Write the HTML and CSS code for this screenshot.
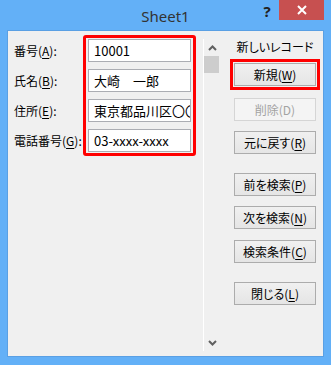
FILE: index.html
```html
<!DOCTYPE html>
<html lang="ja">
<head>
<meta charset="utf-8">
<title>Sheet1</title>
<link rel="stylesheet" href="styles.css">
</head>
<body>
<div class="window">
  <div class="titlebar">
    <div class="tb-left"></div>
    <div class="title">Sheet1</div>
    <div class="tb-controls">
      <div class="help">?</div>
      <div class="close">
        <svg width="10" height="10" viewBox="0 0 10 10"><path d="M1 1 L9 9 M9 1 L1 9" stroke="#fff" stroke-width="2" fill="none"/></svg>
      </div>
    </div>
  </div>
  <div class="client">
    <div class="form">
      <div class="labels">
        <div class="label">番号(<u>A</u>):</div>
        <div class="label">氏名(<u>B</u>):</div>
        <div class="label">住所(<u>E</u>):</div>
        <div class="label">電話番号(<u>G</u>):</div>
      </div>
      <div class="redbox">
        <div class="input">10001</div>
        <div class="input">大崎　一郎</div>
        <div class="input">東京都品川区〇〇</div>
        <div class="input">03-xxxx-xxxx</div>
      </div>
    </div>
    <div class="scrollbar">
      <div class="arrow">
        <svg width="9" height="6" viewBox="0 0 9 6"><path d="M1 5 L4.5 1.5 L8 5" stroke="#606060" stroke-width="2" fill="none"/></svg>
      </div>
      <div class="thumb"></div>
      <div class="track"></div>
      <div class="arrow">
        <svg width="9" height="6" viewBox="0 0 9 6"><path d="M1 1 L4.5 4.5 L8 1" stroke="#606060" stroke-width="2" fill="none"/></svg>
      </div>
    </div>
    <div class="buttons">
      <div class="caption">新しいレコード</div>
      <button class="btn focused">新規(<u>W</u>)</button>
      <button class="btn disabled">削除(D)</button>
      <button class="btn">元に戻す(<u>R</u>)</button>
      <button class="btn group">前を検索(<u>P</u>)</button>
      <button class="btn">次を検索(<u>N</u>)</button>
      <button class="btn after">検索条件(<u>C</u>)</button>
      <button class="btn group">閉じる(<u>L</u>)</button>
    </div>
  </div>
</div>
</body>
</html>
```

FILE: styles.css
```css
* { box-sizing: border-box; }
html, body { margin: 0; padding: 0; }
body {
  width: 331px;
  height: 365px;
  overflow: hidden;
  font-family: "Noto Sans CJK JP", "Noto Sans", sans-serif;
  font-feature-settings: "palt";
}
.window {
  width: 331px;
  height: 365px;
  background: #63b0f7;
  padding: 0 7px 8px 7px;
  display: flex;
  flex-direction: column;
}
.titlebar {
  height: 30px;
  display: grid;
  grid-template-columns: 1fr auto 1fr;
  margin: 0 -7px;
}
.title {
  font-family: "Noto Sans", sans-serif;
  font-size: 15px;
  color: #333;
  line-height: 30px;
  padding-top: 1px;
}
.tb-controls {
  display: flex;
  justify-content: flex-end;
  align-items: flex-start;
  padding-right: 7px;
}
.help {
  width: 24px;
  height: 20px;
  font-family: "Noto Sans", sans-serif;
  font-weight: bold;
  font-size: 15px;
  line-height: 22px;
  color: #222;
  text-align: center;
}
.close {
  width: 45px;
  height: 20px;
  background: #c75050;
  display: flex;
  align-items: center;
  justify-content: center;
}
.client {
  height: 327px;
  background: #f0f0f0;
  border: 1px solid #5aa0e4;
  display: flex;
  align-items: flex-start;
}
.form {
  display: flex;
  margin: 4px 0 0 6px;
}
.labels {
  width: 69px;
  padding-top: 4px;
  display: flex;
  flex-direction: column;
  gap: 7px;
}
.label {
  height: 23px;
  line-height: 23px;
  font-size: 12px;
  color: #000;
  white-space: nowrap;
}
u {
  text-underline-offset: 2px;
}
.redbox {
  position: relative;
  border: 3px solid #ff0000;
  border-radius: 3px;
  padding: 1px 2px;
  display: flex;
  flex-direction: column;
  gap: 7px;
}
.input {
  width: 103px;
  height: 23px;
  border: 1px solid #abadb3;
  background: #fff;
  font-size: 13px;
  line-height: 21px;
  padding-left: 5px;
  white-space: nowrap;
  overflow: hidden;
  color: #000;
}
.scrollbar {
  margin: 8px 0 0 7px;
  width: 17px;
  height: 312px;
  border-left: 1px solid #fff;
  display: flex;
  flex-direction: column;
}
.arrow {
  height: 17px;
  display: flex;
  align-items: center;
  justify-content: center;
}
.thumb {
  height: 17px;
  width: 15px;
  background: #cdcdcd;
}
.track { flex: 1; }
.buttons {
  margin: 8px 0 0 14px;
  width: 82px;
  display: flex;
  flex-direction: column;
}
.caption {
  font-size: 12px;
  line-height: 16px;
  text-align: center;
  color: #000;
  margin-bottom: 8px;
  white-space: nowrap;
}
.btn {
  height: 23px;
  width: 82px;
  border: 1px solid #acacac;
  background: linear-gradient(#f0f0f0, #e5e5e5);
  font-family: "Noto Sans CJK JP", "Noto Sans", sans-serif;
  font-feature-settings: "palt";
  font-size: 12px;
  color: #000;
  padding: 0;
  margin: 0 0 10px 0;
  white-space: nowrap;
}
.btn.focused {
  outline: 3px solid #ff0000;
  outline-offset: 1px;
  margin-bottom: 12px;
}
.btn.disabled {
  background: #f4f4f4;
  border-color: #d5d5d5;
  color: #a3a3a3;
}
.btn.group { margin-top: 9px; }
.btn.after { margin-top: 1px; }
```
